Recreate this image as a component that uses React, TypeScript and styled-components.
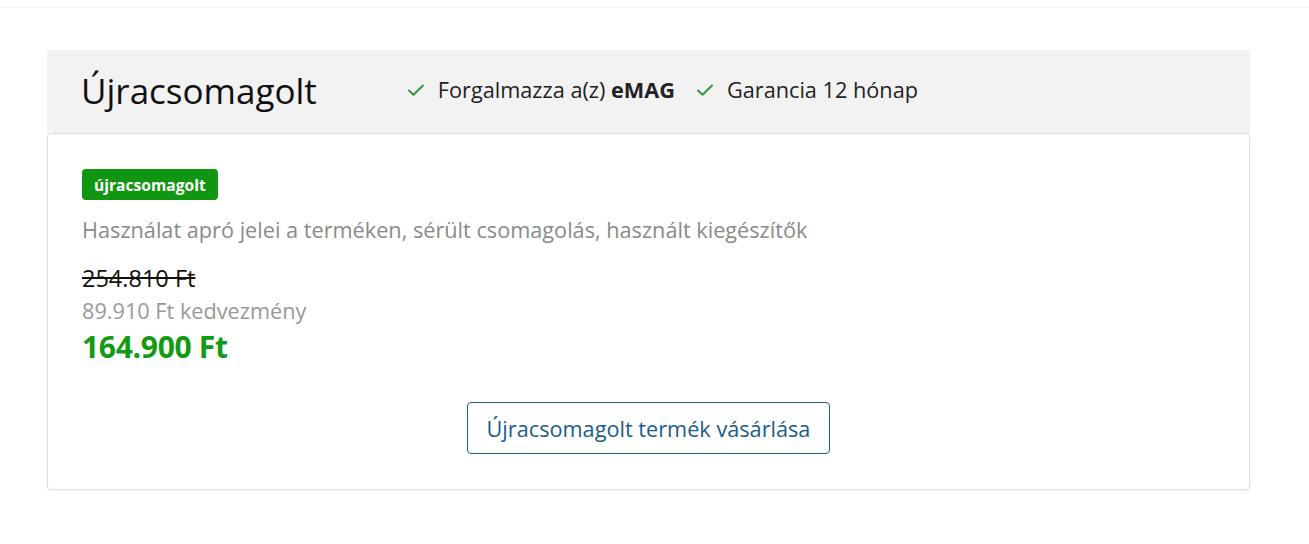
import styled, { createGlobalStyle } from "styled-components";

const GlobalStyle = createGlobalStyle`
    body {
        margin: 0;
        background: #fff;
        font-family: "Open Sans", "Noto Sans", sans-serif;
        color: #222;
    }
`;

const Check = () => (
    <svg width="18" height="14" viewBox="0 0 18 14" fill="none">
        <path d="M2 7.5l4.5 4.2L16 2.5" stroke="#2e9a3a" strokeWidth="2" strokeLinecap="round" strokeLinejoin="round" />
    </svg>
);

const App = () => {
    return (
        <>
            <GlobalStyle />
            <Page>
                <Section>
                    <Header>
                        <Title>Újracsomagolt</Title>
                        <Perks>
                            <Perk>
                                <Check />
                                <span>Forgalmazza a(z) <b>eMAG</b></span>
                            </Perk>
                            <Perk>
                                <Check />
                                <span>Garancia 12 hónap</span>
                            </Perk>
                        </Perks>
                    </Header>
                    <Card>
                        <Badge>újracsomagolt</Badge>
                        <Desc>Használat apró jelei a terméken, sérült csomagolás, használt kiegészítők</Desc>
                        <Prices>
                            <OldPrice>254.810 Ft</OldPrice>
                            <Discount>89.910 Ft kedvezmény</Discount>
                            <Price>164.900 Ft</Price>
                        </Prices>
                        <Actions>
                            <BuyButton>Újracsomagolt termék vásárlása</BuyButton>
                        </Actions>
                    </Card>
                </Section>
            </Page>
        </>
    );
};

export default App;

const Page = styled.div`
    border-top: 1px solid #f2f2f2;
    margin-top: 7px;
    padding: 42px 59px 40px 47px;
`;

const Section = styled.div`
    display: flex;
    flex-direction: column;
`;

const Header = styled.div`
    display: flex;
    align-items: center;
    height: 83px;
    padding-left: 34px;
    padding-bottom: 4px;
    box-sizing: border-box;
    background: #f2f2f2;
`;

const Title = styled.h2`
    margin: 0;
    font-size: 35px;
    font-weight: 400;
    color: #111;
    line-height: 1;
    transform: translateY(1px);
`;

const Perks = styled.div`
    display: flex;
    align-items: center;
    gap: 21px;
    margin-left: 90px;
`;

const Perk = styled.div`
    display: flex;
    align-items: center;
    gap: 13px;
    font-size: 21.7px;
    color: #222;

    b {
        font-weight: 700;
    }
`;

const Card = styled.div`
    display: flex;
    flex-direction: column;
    align-items: flex-start;
    background: #fff;
    border: 1px solid #ddd;
    border-radius: 4px;
    box-shadow: 0 1px 3px rgba(0, 0, 0, 0.06);
    padding: 35px 34px 35px;
`;

const Badge = styled.span`
    display: inline-flex;
    align-items: center;
    height: 31px;
    padding: 0 12px;
    border-radius: 4px;
    background: #119611;
    color: #fff;
    font-size: 15.6px;
    font-weight: 700;
`;

const Desc = styled.p`
    margin: 16px 0 0;
    font-size: 21.7px;
    line-height: 28px;
    color: #8a8a8a;
`;

const Prices = styled.div`
    display: flex;
    flex-direction: column;
    margin-top: 18px;
`;

const OldPrice = styled.span`
    font-size: 23.5px;
    line-height: 32px;
    color: #111;
    text-decoration: line-through;
`;

const Discount = styled.span`
    font-size: 21.7px;
    line-height: 33px;
    color: #999;
`;

const Price = styled.span`
    font-size: 30px;
    font-weight: 700;
    line-height: 40px;
    color: #139a13;
    letter-spacing: -0.3px;
`;

const Actions = styled.div`
    display: flex;
    justify-content: center;
    align-self: stretch;
    margin-top: 35px;
`;

const BuyButton = styled.button`
    height: 52px;
    padding: 0 19px;
    background: #fff;
    border: 1px solid #1f5f8b;
    border-radius: 4px;
    color: #1c5c88;
    font-family: "Open Sans", "Noto Sans", sans-serif;
    font-size: 21.7px;
    cursor: pointer;
`;
